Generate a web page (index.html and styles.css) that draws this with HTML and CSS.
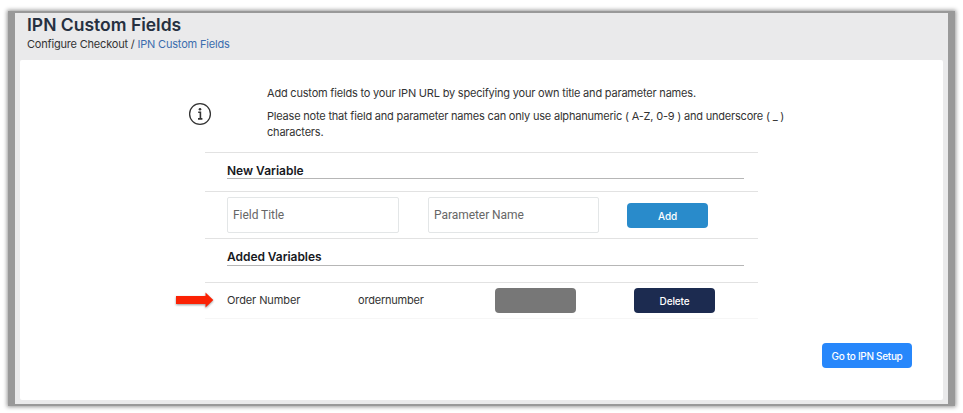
FILE: index.html
```html
<!DOCTYPE html>
<html lang="en">
<head>
<meta charset="utf-8">
<title>IPN Custom Fields</title>
<link rel="stylesheet" href="styles.css">
</head>
<body>
<div class="frame">
  <main class="page">
    <header class="page-header">
      <h1>IPN Custom Fields</h1>
      <nav class="breadcrumb"><span>Configure Checkout / </span><a href="#">IPN Custom Fields</a></nav>
    </header>
    <section class="card">
      <div class="intro">
        <svg class="info" width="24" height="24" viewBox="0 0 24 24" fill="none" stroke="#333" aria-hidden="true">
          <circle cx="12" cy="12" r="10.4" stroke-width="1.3"/>
          <path d="M10.2 10.2H12.4V16.6M10 16.9H14.4" stroke-width="1.6"/>
          <circle cx="12" cy="7.2" r="1.3" fill="#333" stroke="none"/>
        </svg>
        <div class="intro-text">
          <p>Add custom fields to your IPN URL by specifying your own title and parameter names.</p>
          <p>Please note that field and parameter names can only use alphanumeric ( A-Z, 0-9 ) and underscore ( _ )<br>characters.</p>
        </div>
      </div>
      <div class="table">
        <div class="heading heading-new"><h2>New Variable</h2></div>
        <form class="new-row">
          <input class="field-title" type="text" placeholder="Field Title" aria-label="Field Title">
          <input class="field-param" type="text" placeholder="Parameter Name" aria-label="Parameter Name">
          <button class="btn btn-add" type="button">Add</button>
        </form>
        <div class="heading heading-added"><h2>Added Variables</h2></div>
        <div class="var-row">
          <svg class="arrow" width="46" height="22" viewBox="0 0 46 22" aria-hidden="true"><path d="M4 7H33.5V3.4L41.3 11L33.5 18.6V15H4Z" fill="#fb2204"/></svg>
          <span class="name">Order Number</span>
          <span class="param">ordernumber</span>
          <button class="btn btn-blank" type="button" disabled aria-label="Edit"></button>
          <button class="btn btn-delete" type="button">Delete</button>
        </div>
      </div>
      <footer class="actions"><button class="btn btn-go" type="button">Go to IPN Setup</button></footer>
    </section>
  </main>
</div>
</body>
</html>
```
FILE: styles.css
```css
* { box-sizing: border-box; }
body {
  margin: 0;
  height: 413px;
  overflow: hidden;
  background: #fff;
  color: #333;
  font: 11px/16px Inter, "Liberation Sans", sans-serif;
}
h1, h2, p { margin: 0; }
.frame {
  display: flow-root;
  width: 947px;
  height: 395px;
  margin: 11px 8px 0;
  padding: 2px 7px;
  background: #999;
  box-shadow: 0 0 4px 1px #999;
}
.page {
  height: 391px;
  padding: 0 5px;
  background: #eaeaeb;
}
.page-header { height: 47px; padding-left: 7px; }
h1 {
  padding-top: 1px;
  color: #263040;
  font-size: 17.5px;
  line-height: 22px;
  font-weight: 600;
}
.breadcrumb {
  display: flex;
  line-height: 17px;
  letter-spacing: -0.19px;
  white-space: pre;
}
.breadcrumb a { color: #3b6dae; text-decoration: none; }
.card {
  height: 340px;
  background: #fff;
  border-radius: 2px;
}
.intro { display: flex; height: 92px; padding: 25px 0 0 168px; }
.info { margin-top: 17px; }
.intro-text {
  margin-left: 55px;
  letter-spacing: -0.2px;
  white-space: nowrap;
}
.intro-text p + p { margin-top: 7px; }
.table { width: 553px; margin-left: 185px; }
.heading { border-top: 1px solid #e2e2e2; padding: 0 14px 0 22px; }
.heading h2 {
  color: #17191e;
  font-size: 12px;
  line-height: 16px;
  font-weight: 600;
  border-bottom: 1px solid #b6b6b6;
}
.heading-new { height: 39px; padding-top: 10px; }
.heading-new h2 { height: 16px; }
.heading-added { height: 44px; padding-top: 10px; letter-spacing: -0.05px; }
.heading-added h2 { height: 17px; }
.new-row {
  display: flex;
  height: 47px;
  padding: 5px 0 0 22px;
  border-top: 1px solid #e2e2e2;
}
input {
  height: 36px;
  padding: 0 5px;
  border: 1px solid #e3e6e7;
  border-radius: 2px;
  background: #fff;
  font: 12px Roboto, sans-serif;
  letter-spacing: -0.05px;
}
input::placeholder { color: #666; opacity: 1; }
.field-title { width: 172px; }
.field-param { width: 171px; margin-left: 29px; }
.btn {
  display: flex;
  align-items: center;
  justify-content: center;
  height: 25px;
  padding: 0;
  border: 0;
  border-radius: 4px;
  color: #fff;
  font: 500 10px/14px Inter, sans-serif;
  letter-spacing: -0.15px;
  white-space: nowrap;
}
.btn-add { width: 81px; margin: 6px 0 0 28px; background: #298bcb; }
.var-row {
  position: relative;
  display: flex;
  height: 37px;
  padding: 5px 0 0 22px;
  border-top: 1px solid #e2e2e2;
  border-bottom: 1px solid #f6f6f6;
}
.arrow {
  position: absolute;
  left: -33px;
  top: 6px;
  filter: drop-shadow(0 1px 1px #999);
}
.name { width: 131px; line-height: 25px; letter-spacing: -0.1px; }
.param { width: 137px; line-height: 25px; letter-spacing: -0.2px; }
.btn-blank { width: 81px; background: #777; }
.btn-delete { width: 81px; margin-left: 58px; background: #1c2b50; }
.actions { display: flex; justify-content: flex-end; padding: 24px 31px 0 0; }
.btn-go { width: 90px; background: #2787fb; letter-spacing: -0.3px; }
```
